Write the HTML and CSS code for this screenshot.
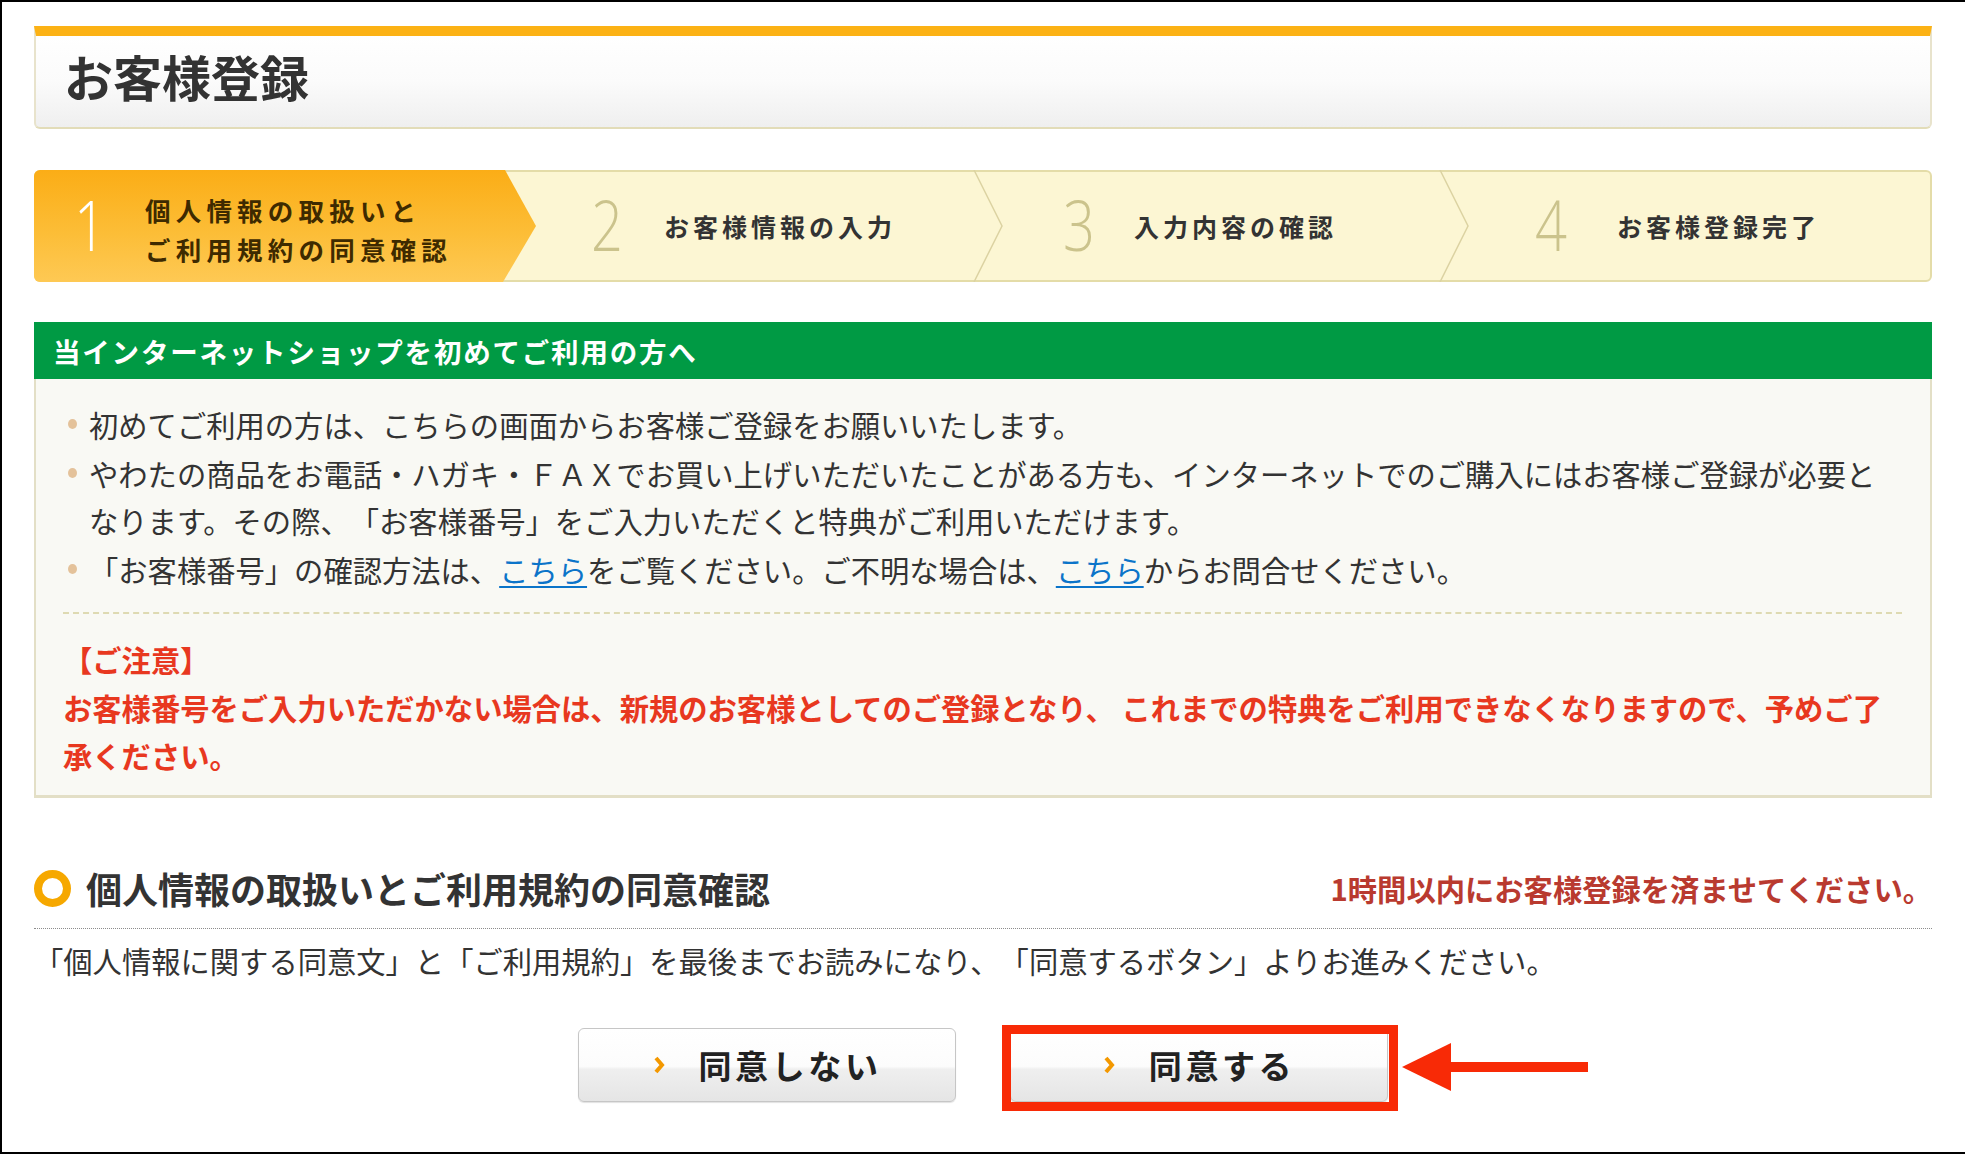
FILE: index.html
```html
<!DOCTYPE html>
<html lang="ja">
<head>
<meta charset="utf-8">
<title>お客様登録</title>
<link rel="stylesheet" href="styles.css">
</head>
<body>
<div class="frame">
  <div class="page">
    <header class="title-box">
      <h1>お客様登録</h1>
    </header>

    <ol class="steps">
      <li class="step step-1">
        <span class="num">1</span>
        <span class="label">個人情報の取扱いと<br>ご利用規約の同意確認</span>
      </li>
      <li class="step step-2">
        <span class="num">2</span>
        <span class="label">お客様情報の入力</span>
        <svg class="chev" width="32" height="112" viewBox="0 0 32 112"><polyline points="3,0 31,56 3,112" fill="none" stroke="#dcd3a2" stroke-width="1.5"/></svg>
      </li>
      <li class="step step-3">
        <span class="num">3</span>
        <span class="label">入力内容の確認</span>
        <svg class="chev" width="32" height="112" viewBox="0 0 32 112"><polyline points="3,0 31,56 3,112" fill="none" stroke="#dcd3a2" stroke-width="1.5"/></svg>
      </li>
      <li class="step step-4">
        <span class="num">4</span>
        <span class="label">お客様登録完了</span>
      </li>
    </ol>

    <section class="notice">
      <h2 class="notice-head">当インターネットショップを初めてご利用の方へ</h2>
      <div class="notice-body">
        <ul class="bullets">
          <li>初めてご利用の方は、こちらの画面からお客様ご登録をお願いいたします。</li>
          <li>やわたの商品をお電話・ハガキ・ＦＡＸでお買い上げいただいたことがある方も、インターネットでのご購入にはお客様ご登録が必要となります。その際、「お客様番号」をご入力いただくと特典がご利用いただけます。</li>
          <li>「お客様番号」の確認方法は、<a href="#" class="link">こちら</a>をご覧ください。ご不明な場合は、<a href="#" class="link">こちら</a>からお問合せください。</li>
        </ul>
        <div class="caution">
          <p class="caution-title">【ご注意】</p>
          <p class="caution-text">お客様番号をご入力いただかない場合は、新規のお客様としてのご登録となり、 これまでの特典をご利用できなくなりますので、予めご了承ください。</p>
        </div>
      </div>
    </section>

    <div class="section-head">
      <span class="ring"></span>
      <h2 class="section-title">個人情報の取扱いとご利用規約の同意確認</h2>
      <p class="deadline">1時間以内にお客様登録を済ませてください。</p>
    </div>
    <p class="lead">「個人情報に関する同意文」と「ご利用規約」を最後までお読みになり、「同意するボタン」よりお進みください。</p>

    <div class="buttons">
      <button class="btn" type="button">
        <svg class="btn-chev" width="12" height="20" viewBox="0 0 12 20"><polyline points="3,3 9,10 3,17" fill="none" stroke="#f39800" stroke-width="4"/></svg>
        <span class="btn-label">同意しない</span>
      </button>
      <div class="btn-wrap">
        <button class="btn" type="button">
          <svg class="btn-chev" width="12" height="20" viewBox="0 0 12 20"><polyline points="3,3 9,10 3,17" fill="none" stroke="#f39800" stroke-width="4"/></svg>
          <span class="btn-label">同意する</span>
        </button>
        <span class="highlight"></span>
        <svg class="arrow" width="186" height="48" viewBox="0 0 186 48">
          <polygon points="0,24 49,0 49,48" fill="#f82a06"/>
          <rect x="48" y="19" width="138" height="10" fill="#f82a06"/>
        </svg>
      </div>
    </div>
  </div>
</div>
</body>
</html>
```

FILE: styles.css
```css
* { box-sizing: border-box; }

html, body {
  margin: 0;
  padding: 0;
  background: #fff;
}

body {
  font-family: "Noto Sans CJK JP", "Noto Sans", sans-serif;
  color: #333;
  text-spacing-trim: space-all;
}

.frame {
  width: 1965px;
  height: 1154px;
  border-top: 2px solid #000;
  border-left: 2px solid #000;
  border-bottom: 2px solid #000;
  overflow: hidden;
}

.page {
  width: 1898px;
  margin-left: 32px;
  padding-top: 24px;
}

/* Title */
.title-box {
  height: 103px;
  border-top: 10px solid #fcb215;
  border-left: 2px solid #e8e3cc;
  border-right: 2px solid #e8e3cc;
  border-bottom: 2px solid #e2dcb8;
  border-radius: 0 0 6px 6px;
  background: linear-gradient(#ffffff 0%, #fbfbfb 50%, #efefef 100%);
  display: flex;
  align-items: center;
  padding: 0 0 12px 28px;
}

.title-box h1 {
  margin: 0;
  font-size: 49px;
  font-weight: 700;
  line-height: 1;
  color: #333;
}

/* Steps */
.steps {
  list-style: none;
  margin: 41px 0 0;
  padding: 0;
  height: 112px;
  display: grid;
  grid-template-columns: 500px 466px 466px 1fr;
  background: #fcf6d3;
  border: 2px solid #e4dca8;
  border-radius: 6px;
}

.step {
  position: relative;
  display: flex;
  align-items: center;
}

.step-1 {
  margin: -2px 0 -2px -2px;
  padding-left: 40px;
  background: linear-gradient(#fbad16 0%, #fcbd36 55%, #fec954 100%);
  border-radius: 6px 0 0 6px;
  clip-path: polygon(0 0, calc(100% - 31px) 0, 100% 50%, calc(100% - 33px) 100%, 0 100%);
}
.step-2 { padding-left: 55px; }
.step-3 { padding-left: 61px; }
.step-4 { padding-left: 67px; }

.num {
  width: 40px;
  flex: none;
  font-family: "Open Sans", "Lato", sans-serif;
  font-weight: 300;
  font-size: 70px;
  line-height: 1;
  color: #cbc38c;
  transform: scaleX(0.8);
  transform-origin: left center;
  margin-top: -4px;
}
.step-1 .num { color: #fff; }

.label {
  font-size: 25px;
  font-weight: 700;
  letter-spacing: 4px;
  line-height: 1.2;
  color: #333;
  white-space: nowrap;
}
.step-1 .label {
  margin-left: 31px;
  font-size: 25.5px;
  letter-spacing: 5.2px;
  line-height: 39px;
  color: #3e2a00;
  margin-top: 6px;
}
.step-2 .label { margin-left: 33px; }
.step-3 .label { margin-left: 31px; }
.step-4 .label { margin-left: 42px; }

.chev {
  position: absolute;
  top: -2px;
  right: -1px;
}

/* Notice */
.notice { margin-top: 40px; }

.notice-head {
  margin: 0;
  height: 57px;
  padding-left: 19px;
  display: flex;
  align-items: center;
  background: #009a44;
  color: #fff;
  font-size: 27.5px;
  font-weight: 700;
  letter-spacing: 1.8px;
}

.notice-body {
  background: #f9f9f4;
  border: 2px solid #e3dfc6;
  border-top: 0;
  border-bottom-width: 3px;
  padding: 22px 28px 16px 27px;
}

.bullets {
  list-style: none;
  margin: 0 20px 0 0;
  padding: 0 0 0 26px;
}

.bullets li {
  position: relative;
  font-size: 29.3px;
  line-height: 47px;
  margin-bottom: 2px;
  color: #333;
}
.bullets li:last-child { margin-bottom: 0; }

.bullets li::before {
  content: "";
  position: absolute;
  left: -21px;
  top: 18px;
  width: 9px;
  height: 10px;
  border-radius: 50%;
  background: #e4c29a;
}

.link {
  color: #0b74c9;
  text-decoration: underline;
  text-underline-offset: 4px;
}

.caution {
  margin-top: 19px;
  border-top: 2px dashed #dedab2;
  padding-top: 21px;
}

.caution-title,
.caution-text {
  margin: 0;
  font-size: 29.3px;
  font-weight: 700;
  line-height: 48px;
  color: #e8381f;
}
.caution-text { margin-right: 20px; }

/* Section heading */
.section-head {
  margin-top: 66px;
  height: 65px;
  padding-bottom: 16px;
  border-bottom: 1px dotted #8c8c8c;
  display: flex;
  align-items: center;
}

.ring {
  width: 37px;
  height: 37px;
  flex: none;
  border: 8px solid #f6a800;
  border-radius: 50%;
}

.section-title {
  margin: 0 0 0 15px;
  font-size: 36px;
  font-weight: 700;
  color: #333;
}

.deadline {
  margin: 0 0 0 auto;
  font-size: 29.3px;
  font-weight: 700;
  color: #b93a2f;
}

.lead {
  margin: 7px 0 0;
  font-size: 29.3px;
  line-height: 48px;
  color: #333;
}

/* Buttons */
.buttons {
  margin-top: 44px;
  display: flex;
  justify-content: center;
  gap: 54px;
}

.btn {
  width: 378px;
  height: 74px;
  padding: 0;
  border: 1px solid #c6c6c6;
  border-radius: 6px;
  background: linear-gradient(#ffffff 0%, #fcfcfc 52%, #efefef 56%, #e5e5e5 100%);
  box-shadow: 0 1px 1px rgba(0, 0, 0, 0.12);
  display: flex;
  align-items: center;
  justify-content: center;
  font-family: "Noto Sans CJK JP", sans-serif;
  cursor: pointer;
}

.btn-chev { flex: none; }

.btn-label {
  margin-left: 34px;
  font-size: 33px;
  font-weight: 700;
  letter-spacing: 3.6px;
  color: #222;
}

.btn-wrap {
  position: relative;
}

.highlight {
  position: absolute;
  left: -8px;
  top: -3px;
  width: 396px;
  height: 86px;
  border: 9px solid #f82a06;
  pointer-events: none;
}

.arrow {
  position: absolute;
  left: 392px;
  top: 15px;
}
```
